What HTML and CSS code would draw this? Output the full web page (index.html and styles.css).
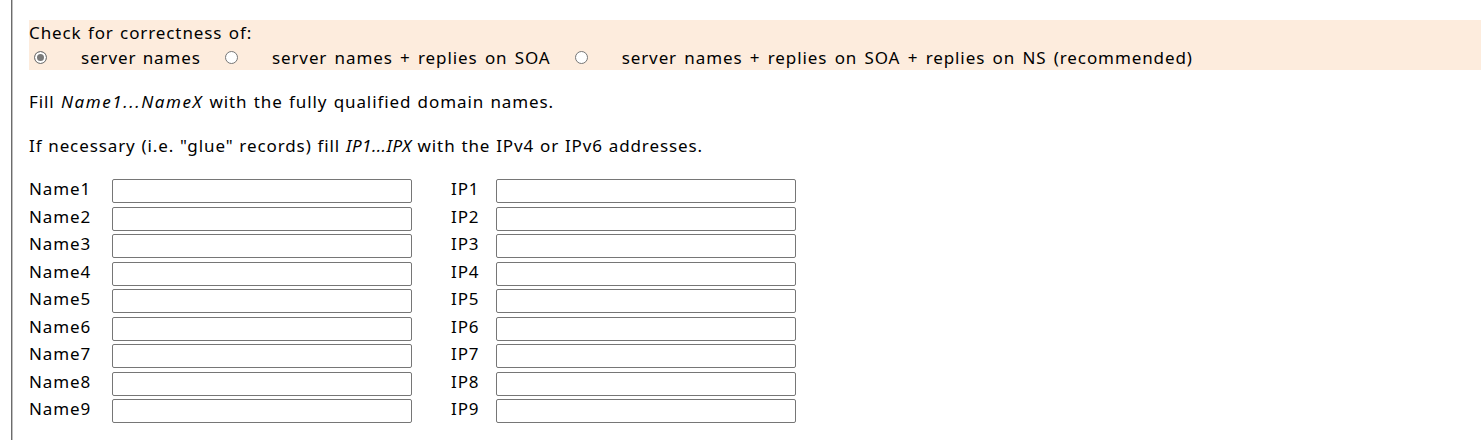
FILE: index.html
```html
<!DOCTYPE html>
<html>
<head>
<meta charset="utf-8">
<link rel="stylesheet" href="styles.css">
</head>
<body>
<div class="frame">
  <div class="options">
    <div class="opt-title">Check for correctness of:</div>
    <div class="opt-row">
      <label class="opt opt1"><input type="radio" name="chk" class="radio" checked><span class="opt-text">server names</span></label>
      <label class="opt opt2"><input type="radio" name="chk" class="radio"><span class="opt-text">server names + replies on SOA</span></label>
      <label class="opt opt3"><input type="radio" name="chk" class="radio"><span class="opt-text">server names + replies on SOA + replies on NS (recommended)</span></label>
    </div>
  </div>
  <p class="note note1">Fill <i>Name1...NameX</i> with the fully qualified domain names.</p>
  <p class="note note2">If necessary (i.e. "glue" records) fill <i>IP1...IPX</i> with the IPv4 or IPv6 addresses.</p>
  <div class="grid">
    <span class="lbl">Name1</span><input class="field" type="text"><span class="lbl ip">IP1</span><input class="field" type="text">
    <span class="lbl">Name2</span><input class="field" type="text"><span class="lbl ip">IP2</span><input class="field" type="text">
    <span class="lbl">Name3</span><input class="field" type="text"><span class="lbl ip">IP3</span><input class="field" type="text">
    <span class="lbl">Name4</span><input class="field" type="text"><span class="lbl ip">IP4</span><input class="field" type="text">
    <span class="lbl">Name5</span><input class="field" type="text"><span class="lbl ip">IP5</span><input class="field" type="text">
    <span class="lbl">Name6</span><input class="field" type="text"><span class="lbl ip">IP6</span><input class="field" type="text">
    <span class="lbl">Name7</span><input class="field" type="text"><span class="lbl ip">IP7</span><input class="field" type="text">
    <span class="lbl">Name8</span><input class="field" type="text"><span class="lbl ip">IP8</span><input class="field" type="text">
    <span class="lbl">Name9</span><input class="field" type="text"><span class="lbl ip">IP9</span><input class="field" type="text">
  </div>
</div>
</body>
</html>
```
FILE: styles.css
```css
html, body {
  margin: 0;
  padding: 0;
  background: #fff;
}
body {
  font-family: "Noto Sans", "Open Sans", sans-serif;
  font-size: 17px;
  letter-spacing: 0.9px;
  color: #000;
}
.frame {
  margin-left: 11px;
  height: 436px;
  border-left: 2px groove #c0c0c0;
  border-bottom: 2px groove #c0c0c0;
  padding: 20px 0 0 16px;
  box-sizing: content-box;
}
.options {
  background: #fdecdd;
  word-spacing: 2px;
}
.opt-title {
  height: 25px;
  line-height: 25px;
  word-spacing: 1px;
}
.opt-row {
  display: flex;
  align-items: center;
  height: 25px;
}
.opt {
  display: flex;
  align-items: center;
}
.radio {
  appearance: none;
  -webkit-appearance: none;
  width: 13px;
  height: 13px;
  margin: 0 0 0 5px;
  border: 1px solid #767676;
  border-radius: 50%;
  background: #fff;
  box-sizing: border-box;
  position: relative;
}
.radio:checked {
  border-color: #767676;
  box-shadow: inset 0 0 0 2px #fff;
  background: #7a7a7a;
}
.opt-text {
  margin-left: 34px;
}
.opt1 .opt-text { word-spacing: 1px; }
.opt2 { margin-left: 19px; }
.opt3 { margin-left: 19px; }
.note {
  margin: 0;
  line-height: 22px;
  word-spacing: 1px;
}
.note1 { margin-top: 21px; }
.note2 {
  margin-top: 22px;
  word-spacing: 0.5px;
}
.note i {
  font-style: italic;
  letter-spacing: 0.5px;
}
.note1 i {
  letter-spacing: 1.6px;
}
.grid {
  display: grid;
  grid-template-columns: 83px 300px 39px 45px 300px;
  grid-auto-rows: 24px;
  row-gap: 3.55px;
  margin-top: 22px;
  align-items: center;
}
.lbl {
  line-height: 20px;
  align-self: start;
}
.ip {
  grid-column: 4;
}
.field {
  width: 300px;
  height: 24px;
  box-sizing: border-box;
  margin: 0;
  padding: 1px 2px;
  border: 1px solid #767676;
  border-radius: 2px;
  background: #fff;
  font: inherit;
}
```
